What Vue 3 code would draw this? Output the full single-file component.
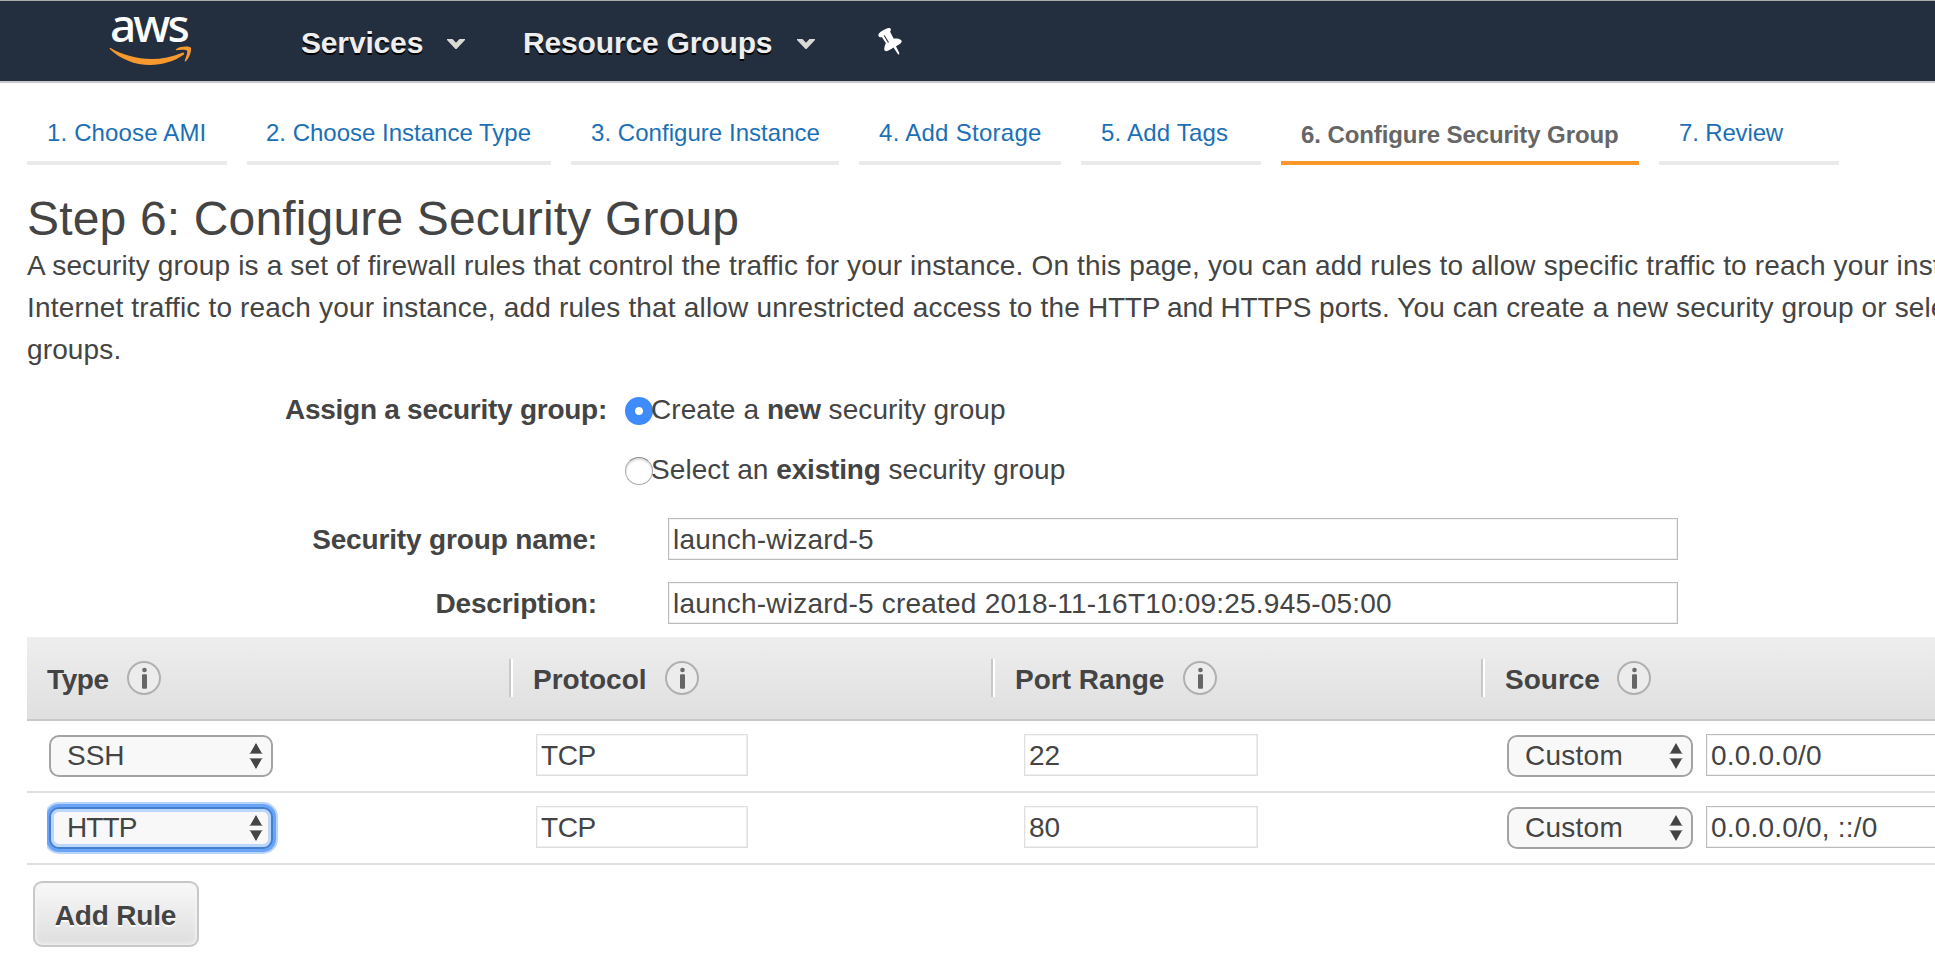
<script setup>
const tabs = [
  { label: '1. Choose AMI', cls: 'w1' },
  { label: '2. Choose Instance Type', cls: 'w2' },
  { label: '3. Configure Instance', cls: 'w3' },
  { label: '4. Add Storage', cls: 'w4' },
  { label: '5. Add Tags', cls: 'w5' },
  { label: '6. Configure Security Group', cls: 'w6 active' },
  { label: '7. Review', cls: 'w7' },
]
const columns = [
  { label: 'Type', cls: 'type' },
  { label: 'Protocol', cls: 'protocol' },
  { label: 'Port Range', cls: 'port' },
  { label: 'Source', cls: 'source' },
]
const rules = [
  { type: 'SSH', protocol: 'TCP', port: '22', source: '0.0.0.0/0', focused: false },
  { type: 'HTTP', protocol: 'TCP', port: '80', source: '0.0.0.0/0, ::/0', focused: true },
]
</script>

<template>
  <div class="page">
    <header class="topbar">
      <div class="logo">
        <span class="logo-text">aws</span>
        <svg class="smile" viewBox="0 0 84 20" width="84" height="20">
          <path d="M1 2.200C.2 1.400.8.6 2 1.300c11.500 6.700 25.800 10.700 40.500 10.700 9.900 0 20.800-2 30.800-6.300 1.500-.6 2.800 1 1.300 2.100C65.500 14.500 52.500 18 41.300 18 25.600 18 11.500 12.100 1 2.200z" fill="#f8992f" />
          <path d="M77.900 3.600c-1.100-1.500-7.500-.7-10.400-.4-.9.1-1-.7-.2-1.200C72.400-1.600 80.800-.6 81.800.6c1 1.200-.3 9.600-5 13.600-.7.600-1.400.3-1.100-.5 1.100-2.700 3.400-8.600 2.200-10.100z" fill="#f8992f" />
        </svg>
      </div>
      <nav class="menu">
        <span class="menu-item services">Services</span>
        <svg class="caret" viewBox="0 0 18 10" width="18" height="10"><path d="M0 0h5.500L9 3.800 12.500 0H18v1L9.500 10h-1L0 1z" fill="#d9d9d6" /></svg>
        <span class="menu-item groups">Resource Groups</span>
        <svg class="caret" viewBox="0 0 18 10" width="18" height="10"><path d="M0 0h5.500L9 3.800 12.500 0H18v1L9.500 10h-1L0 1z" fill="#d9d9d6" /></svg>
        <svg class="pin" viewBox="0 0 24 27" width="24" height="27">
          <path d="M.5 8C-.2 6.500 1 5 3.500 3.200 7 .8 10.500-.6 12.200.2c1 .9.9 2.200-.1 3.500l3.700 7c3-.3 6.700.2 7.800 2 .5 1.200-.6 2.500-3 4l-2.600 1.500 3.300 6.800-.3 1.700-1.200-.8-4.300-6.300c-2.200 1.500-5.200 3.400-7.300 3.700C6 23 6 21.500 6.400 19.500c.3-1.800 1-3.200 1.500-4.200L4 9.200C2.500 9.600.9 9.300.5 8z" fill="#fff" />
          <path d="M6.200 7.500l4.300 7" stroke="#232f3e" stroke-width="1.100" fill="none" />
        </svg>
      </nav>
    </header>

    <nav class="tabs">
      <a v-for="t in tabs" :key="t.label" class="tab" :class="t.cls"><span>{{ t.label }}</span></a>
    </nav>

    <main class="content">
      <h1>Step 6: Configure Security Group</h1>
      <div class="intro">
        <div class="l1">A security group is a set of firewall rules that control the traffic for your instance. On this page, you can add rules to allow specific traffic to reach your inst</div>
        <div class="l2"><span class="l2-start">Internet traffic to reach your instance, add rules that allow unrestricted access to the </span><span class="l2-ports">HTTP and HTTPS</span> ports. You can create a new security group or sele</div>
        <div>groups.</div>
      </div>

      <div class="assign">
        <div class="assign-label">Assign a security group:</div>
        <div class="options">
          <label class="option"><span class="radio on"></span><span class="opt-text o1">Create a <b>new</b> security group</span></label>
          <label class="option"><span class="radio"></span><span class="opt-text o2">Select an <b>existing</b> security group</span></label>
        </div>
      </div>
      <div class="field">
        <label class="name-label">Security group name:</label>
        <input class="box long" value="launch-wizard-5" />
      </div>
      <div class="field">
        <label class="desc-label">Description:</label>
        <input class="box long desc" value="launch-wizard-5 created 2018-11-16T10:09:25.945-05:00" />
      </div>

      <section class="table">
        <div class="grid head">
          <div v-for="c in columns" :key="c.label" class="hcell" :class="c.cls">
            <span class="hlabel">{{ c.label }}</span>
            <svg class="info" viewBox="0 0 36 36" width="36" height="36">
              <circle cx="18" cy="18" r="16" fill="#ececec" stroke="#b0b0b0" stroke-width="2" />
              <circle cx="18.500" cy="10" r="2.300" fill="#6a6a6a" />
              <rect x="16" y="14.300" width="5" height="14.500" rx="1" fill="#666" />
            </svg>
          </div>
        </div>
        <div v-for="r in rules" :key="r.type" class="grid row">
          <div class="cell type">
            <div class="select wide" :class="{ focused: r.focused }">
              <span>{{ r.type }}</span>
              <svg class="arrows" viewBox="0 0 14 26" width="14" height="26"><path d="M7 0l6 10.500H1zM7 26L1 15.500h12z" fill="#444" /><path d="M.5 10.500h13M.5 15.500h13" stroke="#8a8a8a" /></svg>
            </div>
          </div>
          <div class="cell protocol"><input class="box pale proto-box" :value="r.protocol" /></div>
          <div class="cell port"><input class="box pale port-box" :value="r.port" /></div>
          <div class="cell source">
            <div class="select custom">
              <span>Custom</span>
              <svg class="arrows" viewBox="0 0 14 26" width="14" height="26"><path d="M7 0l6 10.500H1zM7 26L1 15.500h12z" fill="#444" /><path d="M.5 10.500h13M.5 15.500h13" stroke="#8a8a8a" /></svg>
            </div>
            <input class="box source-box" :value="r.source" />
          </div>
        </div>
      </section>
      <button class="add">Add Rule</button>
    </main>
  </div>
</template>

<style>
body { background: #fff; }
</style>

<style scoped>
* { box-sizing: border-box; }
.page {
  width: 1935px; height: 959px; overflow: hidden; background: #fff; color: #444;
  font-family: "Liberation Sans", Arial, sans-serif; font-size: 28px; line-height: 42px;
}
.topbar { height: 83px; background: #232f3e; border-top: 1px solid #a9abad; border-bottom: 2px solid #c8c9ce; display: flex; }
.logo { width: 84px; margin-left: 109px; padding-top: 3px; display: flex; flex-direction: column; }
.logo-text { font-family: "Noto Sans", sans-serif; font-weight: 500; font-size: 46px; line-height: 40px; height: 43px; color: #fff; letter-spacing: -3px; padding-left: 1px; width: 84px; }
.smile { display: block; overflow: visible; }
.menu { display: flex; align-items: flex-start; }
.menu-item { color: #eee; font-size: 30px; font-weight: bold; line-height: 40px; padding-top: 22px; text-shadow: 0 2px 0 #000; white-space: nowrap; letter-spacing: -0.16px; }
.services { margin-left: 108px; width: 146px; }
.groups { margin-left: 58px; width: 274px; }
.caret { margin-top: 38px; }
.pin { margin: 27px 0 0 63px; overflow: visible; }

.tabs { display: flex; gap: 20px; padding: 22px 0 0 27px; height: 82px; }
.tab { height: 60px; border-bottom: 4px solid #eaeaea; padding-left: 20px; font-size: 24px; line-height: 56px; color: #1b70b5; white-space: nowrap; flex: none; }
.tab.active { color: #666; font-weight: bold; border-color: #fb972c; line-height: 60px; }
.w1 { width: 200px; letter-spacing: 0.15px; }
.w2 { width: 304px; padding-left: 19px; }
.w3 { width: 268px; letter-spacing: 0.04px; }
.w4 { width: 202px; letter-spacing: 0.28px; }
.w5 { width: 180px; letter-spacing: 0.2px; }
.w6 { width: 358px; letter-spacing: -0.09px; }
.w7 { width: 180px; letter-spacing: -0.15px; }

.content { padding-left: 27px; }
h1 { margin: 0; padding-top: 28px; height: 80px; font-size: 48px; line-height: 52px; font-weight: normal; white-space: nowrap; letter-spacing: 0.16px; }
.intro { height: 126px; white-space: nowrap; letter-spacing: 0.13px; }
.l1 { letter-spacing: 0.155px; }
.l2-start { letter-spacing: 0.175px; }
.l2-ports { letter-spacing: -0.25px; }
.assign { display: flex; height: 120px; margin-top: 18px; }
.assign-label { width: 580px; text-align: right; font-weight: bold; white-space: nowrap; letter-spacing: -0.26px; }
.options { margin-left: 18px; }
.option { display: flex; height: 60px; white-space: nowrap; }
.radio { width: 28px; height: 28px; margin-top: 8px; border-radius: 50%; flex: none; border: 1px solid #aaa; border-top-color: #888; background: #fff; box-shadow: inset 0 2px 2px #ddd; }
.radio.on { border: 0; background: radial-gradient(circle, #fff 0 3.500px, #3e8bfb 4.500px); box-shadow: none; }
.opt-text { margin-left: -2px; letter-spacing: 0.08px; }
.opt-text b { letter-spacing: -0.2px; }
.field { display: flex; height: 64px; }
.field:nth-of-type(3) { margin-top: 9px; }
.field label { width: 570px; text-align: right; font-weight: bold; white-space: nowrap; letter-spacing: -0.15px; padding-top: 1px; }
.box { height: 42px; border: 1px solid #bbb; box-shadow: inset -1px -1px 0 #eee, inset 1px 1px 0 #f4f4f4; padding: 2px 0 0 4px; margin: 0; font: inherit; line-height: 38px; color: #444; background: #fff; border-radius: 0; outline: 0; }
.long { width: 1010px; margin-left: 71px; letter-spacing: 0.21px; }
.box.pale { border-color: #dfdfdf; }

.table { margin-top: -9px; }
.grid { display: grid; grid-template-columns: 484px 482px 490px 1fr; }
.head { height: 84px; background: linear-gradient(#eee, #dfdfdf); border-bottom: 2px solid #c8c8c8; }
.hcell { display: flex; font-weight: bold; padding: 22px 0 0 20px; height: 82px; }
.hcell:not(.type)::before { content: ""; width: 4px; height: 38px; margin-left: -22px; margin-right: 20px; background: linear-gradient(90deg, #c8c8c8 50%, #fff 50%); }
.hlabel { white-space: nowrap; line-height: 42px; }
.info { margin: 1px 0 0 17px; flex: none; }
.hcell.type .hlabel { letter-spacing: -0.4px; }
.hcell.port .info { margin-left: 18px; }
.hcell.source .info { margin-left: 16px; }
.row { height: 72px; border-bottom: 2px solid #dfdfdf; }
.cell { display: flex; align-items: flex-start; padding-top: 13px; height: 70px; }
.cell.type { margin-left: 20px; padding: 14px 0 0 2px; overflow: hidden; }
.cell.protocol { padding-left: 25px; }
.cell.port { padding-left: 31px; }
.cell.source { padding-left: 24px; overflow: hidden; }
.select { height: 42px; border: 2px solid #a3a3a3; border-radius: 10px; background: #f8f8f8; display: flex; justify-content: space-between; padding: 0 8px 0 16px; line-height: 37px; flex: none; }
.arrows { margin-top: 6px; flex: none; }
.wide { width: 224px; }
.custom { width: 186px; margin-top: 1px; letter-spacing: 0.25px; }
.focused { border-color: #457fd2; box-shadow: 0 0 0 3px #6aa4f8, 0 0 0 5px #bad5fb, inset 0 0 0 3px #bdd7fa; letter-spacing: -0.9px; }
.proto-box { width: 212px; letter-spacing: -0.4px; }
.port-box { width: 234px; }
.source-box { width: 400px; margin-left: 13px; flex: none; letter-spacing: 0.2px; }
.add { display: block; margin: 16px 0 0 6px; width: 166px; height: 66px; padding: 3px 1px 0 0; border: 2px solid #c8c8c8; border-radius: 9px; background: linear-gradient(#f8f8f8, #dedede); box-shadow: inset 0 0 4px 1px #f4f4f4; color: #444; font: bold 28px/42px "Liberation Sans", Arial, sans-serif; letter-spacing: -0.2px; text-shadow: 0 2px 0 #fff; }
</style>
